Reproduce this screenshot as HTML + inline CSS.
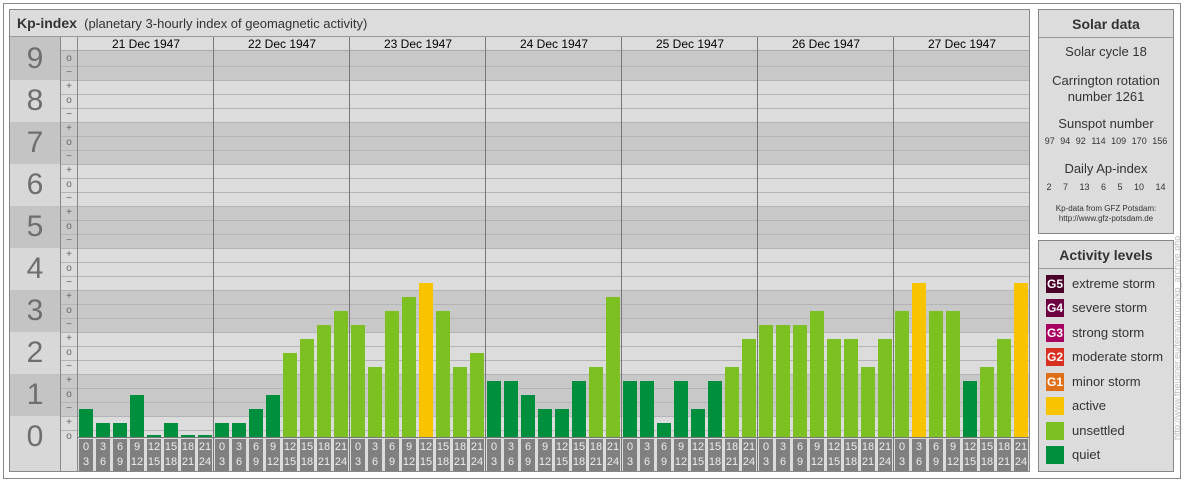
<!DOCTYPE html>
<html><head><meta charset="utf-8"><style>
*{margin:0;padding:0;box-sizing:border-box}
body{width:1184px;height:480px;background:#fff;position:relative;overflow:hidden;font-family:"Liberation Sans",sans-serif;color:#333}
div{position:absolute}
.num{left:10px;width:50px;text-align:center;font-size:30px;color:#6e6e6e}
.pm{left:61px;width:16px;text-align:center;font-size:10px;color:#666}
.lbl{width:14px;height:32px;top:439px;background:#808080;color:#eee;font-size:11px;text-align:center;line-height:15px;padding-top:1px}
.bar{width:14px}
.day{top:37px;height:14px;width:136px;text-align:center;font-size:12px;color:#000;line-height:14px}
.leg{left:1046px;width:18px;height:18px;color:#fff;font-size:12px;font-weight:bold;text-align:center;line-height:18px}
.lt{left:1072px;font-size:13px;color:#333}
.c{text-align:center;font-size:13px;color:#333;left:1039px;width:134px}
</style></head><body>
<div style="left:3px;top:3px;width:1178px;height:476px;border:1px solid #888"></div>
<div style="left:9px;top:9px;width:1021px;height:463px;border:1px solid #888;background:#dcdcdc"></div>
<div style="left:10px;top:10px;width:1019px;height:27px;border-bottom:1px solid #999;font-size:13px;line-height:26px;padding-left:7px;color:#333"><b style="font-size:14px">Kp-index</b>&nbsp;&nbsp;(planetary 3-hourly index of geomagnetic activity)</div>
<div id="chart"></div>
<div style="left:1038px;top:9px;width:136px;height:225px;border:1px solid #888;background:#dcdcdc"></div>
<div style="left:1039px;top:10px;width:134px;height:28px;border-bottom:1px solid #999;text-align:center;font-weight:bold;font-size:14px;line-height:28px">Solar data</div>
<div class="c" style="top:44px">Solar cycle 18</div>
<div class="c" style="top:73px;line-height:16px">Carrington rotation<br>number 1261</div>
<div class="c" style="top:116px">Sunspot number</div>
<div class="c" style="top:136px;font-size:9px;word-spacing:3px">97 94 92 114 109 170 156</div>
<div class="c" style="top:161px">Daily Ap-index</div>
<div class="c" style="top:182px;font-size:9px;word-spacing:9px">2 7 13 6 5 10 14</div>
<div class="c" style="top:204px;font-size:8px;line-height:10px">Kp-data from GFZ Potsdam:<br>http://www.gfz-potsdam.de</div>
<div style="left:1038px;top:240px;width:136px;height:232px;border:1px solid #888;background:#dcdcdc"></div>
<div style="left:1039px;top:241px;width:134px;height:28px;border-bottom:1px solid #999;text-align:center;font-weight:bold;font-size:14px;line-height:28px">Activity levels</div>
<div class="leg" style="top:275px;background:#4a0028">G5</div><div class="lt" style="top:276px">extreme storm</div>
<div class="leg" style="top:299px;background:#6c0040">G4</div><div class="lt" style="top:300px">severe storm</div>
<div class="leg" style="top:324px;background:#a80060">G3</div><div class="lt" style="top:325px">strong storm</div>
<div class="leg" style="top:348px;background:#d83020">G2</div><div class="lt" style="top:349px">moderate storm</div>
<div class="leg" style="top:373px;background:#e07018">G1</div><div class="lt" style="top:374px">minor storm</div>
<div class="leg" style="top:397px;background:#f8c400"></div><div class="lt" style="top:398px">active</div>
<div class="leg" style="top:422px;background:#7cc121"></div><div class="lt" style="top:423px">unsettled</div>
<div class="leg" style="top:446px;background:#008f3d"></div><div class="lt" style="top:447px">quiet</div>
<div style="left:1098px;top:354px;width:160px;height:12px;transform:rotate(-90deg);font-size:9px;color:#bbb;white-space:nowrap;text-align:center">http://www.fheusner.eu/terra/aurora/kp_archive.php</div>
<script>
(function(){
var h='';
for(var k=9;k>=0;k--){
 var tp=437-k*42-21, bt=tp+42; if(k==9)tp=51; if(k==0)bt=471;
 var dark=(k%2==1);
 h+='<div style="left:10px;top:'+(k==9?37:tp)+'px;width:50px;height:'+(bt-(k==9?37:tp))+'px;background:'+(dark?'#c4c4c4':'#d8d8d8')+'"></div>';
 var bb=(k==0)?437:bt;
 h+='<div style="left:61px;top:'+tp+'px;width:968px;height:'+(bb-tp)+'px;background:'+(dark?'#c8c8c8':'#dcdcdc')+'"></div>';
}
for(var v=28;v>=0;v--){
 var yc=437-v*14;
 if(yc<52)continue;
 var s=(v%3==0)?'o':(v%3==1?'+':'−');
 h+='<div class="pm" style="top:'+(yc-7)+'px;line-height:14px">'+s+'</div>';
 if(yc-7>52) h+='<div style="left:61px;top:'+(yc-7)+'px;width:968px;height:1px;background:#b4b4b4"></div>';
}
h+='<div style="left:61px;top:37px;width:968px;height:14px;background:#dcdcdc;border-bottom:1px solid #aaa"></div>';
for(var k=9;k>=0;k--){
 h+='<div class="num" style="top:'+(437-k*42-21)+'px;line-height:42px">'+k+'</div>';
}
h+='<div style="left:60px;top:37px;width:1px;height:434px;background:#888"></div>';
h+='<div style="left:77px;top:37px;width:1px;height:434px;background:#888"></div>';
var days=['21','22','23','24','25','26','27'];
var vals=[
[2,1,1,3,0.04,1,0.08,0.08],
[1,1,2,3,6,7,8,9],
[8,5,9,10,11,9,5,6],
[4,4,3,2,2,4,5,10],
[4,4,1,4,2,4,5,7],
[8,8,8,9,7,7,5,7],
[9,11,9,9,4,5,7,11]];
for(var d=0;d<7;d++){
 var x0=78+d*136;
 h+='<div class="day" style="left:'+x0+'px">'+days[d]+' Dec 1947</div>';
 if(d>0)h+='<div style="left:'+(x0-1)+'px;top:37px;width:1px;height:434px;background:#777"></div>';
 for(var b=0;b<8;b++){
  var x=x0+1+b*17, t=vals[d][b], hh=Math.max(2,Math.round(t*14));
  var c=t>=11?'#f8c400':(t>=5?'#7cc121':'#008f3d');
  h+='<div class="bar" style="left:'+x+'px;top:'+(437-hh)+'px;height:'+hh+'px;background:'+c+'"></div>';
  h+='<div class="lbl" style="left:'+x+'px">'+(b*3)+'<br>'+(b*3+3)+'</div>';
 }
}
h+='<div style="left:78px;top:437px;width:951px;height:1px;background:#777"></div>';
document.getElementById('chart').outerHTML=h;
})();
</script>
</body></html>
